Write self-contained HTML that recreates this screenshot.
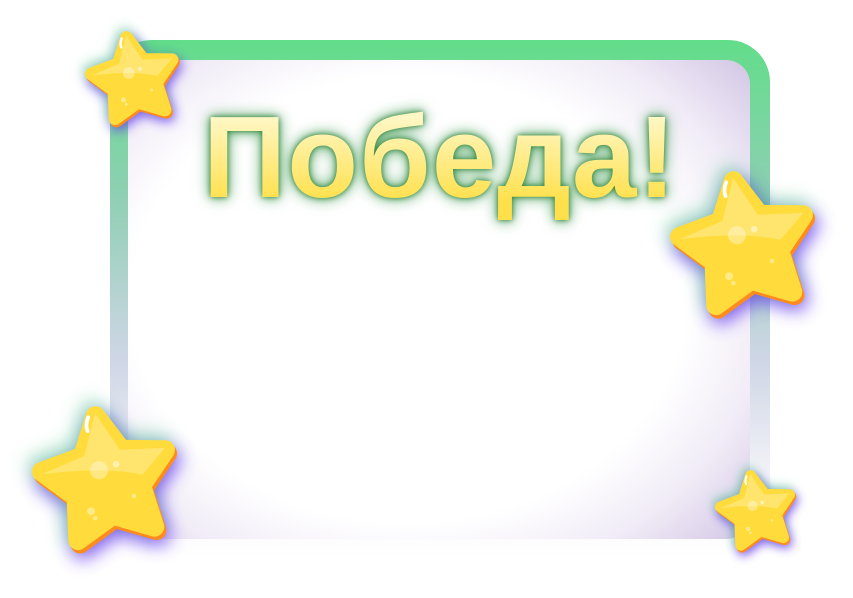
<!DOCTYPE html>
<html><head><meta charset="utf-8"><style>
html,body{margin:0;padding:0;background:#fff;width:853px;height:598px;overflow:hidden;position:relative;font-family:"Liberation Sans",sans-serif}
.frame{position:absolute;left:110px;top:40px;width:660px;height:518px;border-radius:42px;background:linear-gradient(180deg,#62dd8a 0%,#8fcfb3 30%,#cfd6e6 62%,#f4f4f8 85%,#fff 100%)}
.panel{position:absolute;left:128px;top:60px;width:622px;height:479px;border-radius:24px;background:radial-gradient(ellipse 72% 75% at 45% 50%,#fff 62%,#f1ecf7 80%,#d4c8e6 100%)}
.title{position:absolute;left:190px;top:92px;width:500px;text-align:center;font-weight:bold;font-size:116px;line-height:130px;letter-spacing:1px;color:#ffe45a;background:linear-gradient(180deg,#fff7c4 20%,#ffe04a 85%);-webkit-background-clip:text;background-clip:text;-webkit-text-fill-color:transparent;filter:drop-shadow(0 0 3px #2b7d35) drop-shadow(0 0 7px rgba(50,150,70,.8))}
svg.star{position:absolute;overflow:visible}
</style></head><body>
<div class="frame"></div>
<div class="panel"></div>
<div class="title">Победа!</div>
<svg width="0" height="0" style="position:absolute"><defs>
<filter id="gl" x="-50%" y="-50%" width="200%" height="200%"><feGaussianBlur stdDeviation="6"/></filter>
<path id="sp" d="M50 6 L63 31 L91.8 36.4 L72 57 L75.9 85.6 L50 73 L24.1 85.6 L28 57 L8.2 36.4 L37 31Z"/>
<g id="st">
<use href="#sp" fill="#6a3cf0" stroke="#6a3cf0" stroke-width="14" stroke-linejoin="round" transform="translate(2,6)" filter="url(#gl)" opacity=".85"/>
<use href="#sp" fill="#4fc28a" stroke="#4fc28a" stroke-width="14" stroke-linejoin="round" transform="translate(-2,-4)" filter="url(#gl)" opacity=".5"/>
<use href="#sp" fill="#ff8a1e" stroke="#ff8a1e" stroke-width="13" stroke-linejoin="round" transform="translate(1,2.5)"/>
<use href="#sp" fill="#ffdc3c" stroke="#ffdc3c" stroke-width="13" stroke-linejoin="round"/>
<path d="M50 4 L62 31 L92 35 L74 50 Q50 40 8 38 L38 31Z" fill="#ffe77a" opacity=".8"/>
<circle cx="46" cy="42" r="6" fill="#fff" opacity=".35"/>
<circle cx="58" cy="40" r="2.2" fill="#fff" opacity=".45"/>
<circle cx="36" cy="68" r="2.6" fill="#fff" opacity=".4"/>
<circle cx="38" cy="73" r="1.5" fill="#fff" opacity=".4"/>
<circle cx="66" cy="63" r="1.5" fill="#fff" opacity=".4"/>
<path d="M45 6 Q42 11 43 15" stroke="#fff" stroke-width="2.5" stroke-linecap="round" fill="none"/>
</g></defs></svg>
<svg class="star" style="left:85px;top:30px" width="98" height="100" viewBox="0 0 100 100"><g transform="rotate(-10 50 50)"><use href="#st"/></g></svg>
<svg class="star" style="left:670px;top:170px" width="150" height="152" viewBox="0 0 100 100"><g transform="rotate(-10 50 50)"><use href="#st"/></g></svg>
<svg class="star" style="left:32px;top:405px" width="150" height="152" viewBox="0 0 100 100"><g transform="rotate(-10 50 50)"><use href="#st"/></g></svg>
<svg class="star" style="left:715px;top:470px" width="84" height="84" viewBox="0 0 100 100"><g transform="rotate(-10 50 50)"><use href="#st"/></g></svg>
</body></html>
